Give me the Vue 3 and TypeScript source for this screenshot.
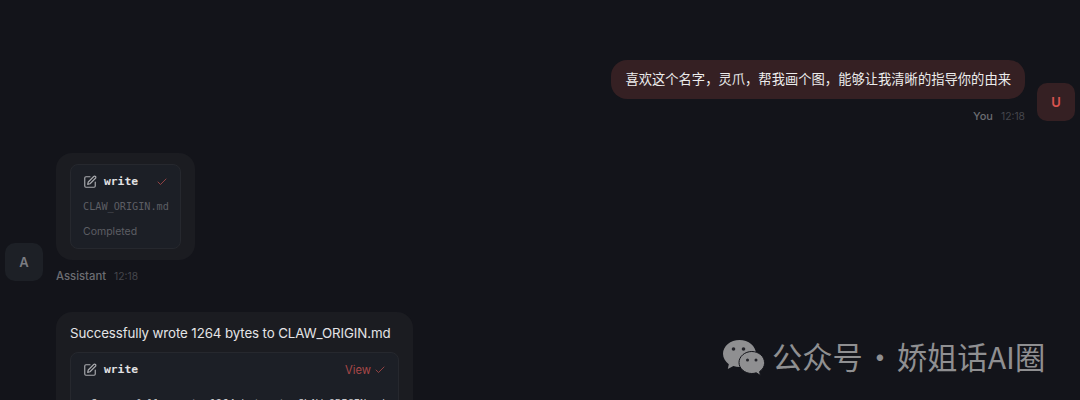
<script setup lang="ts">
import { ref } from 'vue'

const userText = ref('喜欢这个名字\uFF0C灵爪\uFF0C帮我画个图\uFF0C能够让我清晰的指导你的由来')
const fileName = 'CLAW_ORIGIN.md'
const time = '12:18'
</script>

<template>
  <div class="page">
    <section class="thread">
      <div class="row row-user">
        <div class="msg msg-user">
          <div class="bubble bubble-user">{{ userText }}</div>
          <div class="meta">
            <span class="meta-name">You</span>
            <span class="meta-time">{{ time }}</span>
          </div>
        </div>
        <div class="avatar avatar-user">U</div>
      </div>

      <div class="row row-assistant">
        <div class="avatar avatar-assistant">A</div>
        <div class="msg">
          <div class="bubble bubble-tool">
            <div class="tool tool-small">
              <div class="tool-head">
                <svg class="edit-icon" viewBox="0 0 24 24"><path d="M12 3H5a2 2 0 0 0-2 2v14a2 2 0 0 0 2 2h14a2 2 0 0 0 2-2v-7" /><path d="M18.4 2.6a2.1 2.1 0 1 1 3 3L12 15l-4 1 1-4Z" /></svg>
                <span class="tool-name">write</span>
                <svg class="check-icon check-small" viewBox="0 0 24 24"><path d="M20 6 9 17l-5-5" /></svg>
              </div>
              <div class="tool-file">{{ fileName }}</div>
              <div class="tool-status">Completed</div>
            </div>
          </div>
          <div class="meta">
            <span class="meta-name">Assistant</span>
            <span class="meta-time">{{ time }}</span>
          </div>
        </div>
      </div>

      <div class="row row-result">
        <div class="bubble bubble-result">
          <p class="result-text">Successfully wrote 1264 bytes to {{ fileName }}</p>
          <div class="tool tool-wide">
            <div class="tool-head">
              <svg class="edit-icon" viewBox="0 0 24 24"><path d="M12 3H5a2 2 0 0 0-2 2v14a2 2 0 0 0 2 2h14a2 2 0 0 0 2-2v-7" /><path d="M18.4 2.6a2.1 2.1 0 1 1 3 3L12 15l-4 1 1-4Z" /></svg>
              <span class="tool-name">write</span>
              <span class="view">View</span>
              <svg class="check-icon" viewBox="0 0 24 24"><path d="M20 6 9 17l-5-5" /></svg>
            </div>
            <div class="tool-output">Successfully wrote 1264 bytes to {{ fileName }}</div>
          </div>
        </div>
      </div>
    </section>

    <div class="watermark">
      <svg class="wechat" viewBox="0 0 42 36">
        <path class="bubble-back" d="M16.500 0C7.500 0 0 6.200 0 13.800c0 4.200 2.300 7.900 5.800 10.400L4.800 29l5.600-3c1.900.6 4 .9 6.100.9 9 0 16.500-6 16.500-13.100C33 6.200 25.500 0 16.500 0Z" />
        <path class="bubble-front" d="M41.500 22.500c0-6-5.700-11-12.700-11s-12.800 5-12.800 11 5.800 11 12.800 11c1.500 0 3-.2 4.400-.7l4.300 2.700-.9-4c3-2 4.900-5 4.900-8Z" />
        <circle class="eye" cx="10.500" cy="9" r="1.800" />
        <circle class="eye" cx="20.500" cy="9" r="1.800" />
        <circle class="eye" cx="24.500" cy="20" r="1.500" />
        <circle class="eye" cx="33" cy="20" r="1.500" />
      </svg>
      <span class="wm-text">公众号 · 娇姐话AI圈</span>
    </div>
  </div>
</template>

<style scoped>
.page {
  position: relative;
  width: 1080px;
  height: 400px;
  overflow: hidden;
  background-color: #13141a;
  font-family: 'Inter', 'Noto Sans CJK SC', sans-serif;
}

.thread {
  display: flex;
  flex-direction: column;
  padding: 60px 5px 0;
}

.row {
  display: flex;
  align-items: flex-end;
  gap: 12px;
}

.row-user {
  justify-content: flex-end;
}

.row-assistant {
  gap: 13px;
  margin-top: 29px;
}

.row-result {
  margin-top: 28px;
  padding-left: 51px;
}

.msg {
  display: flex;
  flex-direction: column;
}

.msg-user {
  align-items: flex-end;
}

.msg-user .meta {
  margin-top: 10px;
}

.bubble {
  border-radius: 16px;
}

.bubble-user {
  padding: 10px 14px;
  height: 39px;
  box-sizing: border-box;
  background-color: #352023;
  color: #ececec;
  font-size: 13.3px;
  line-height: 19px;
}

.bubble-tool {
  width: 139px;
  height: 107px;
  box-sizing: border-box;
  padding: 11px 14px;
  background-color: #1b1c21;
}

.bubble-result {
  width: 357px;
  height: 140px;
  box-sizing: border-box;
  padding: 12px 14px;
  background-color: #1b1c21;
}

.result-text {
  margin: 0 0 9px;
  color: #e4e4e6;
  font-size: 13.3px;
  letter-spacing: -0.1px;
  line-height: 19px;
  white-space: nowrap;
}

.meta {
  display: flex;
  gap: 8px;
  margin-top: 9px;
  font-size: 11.3px;
  line-height: 15px;
}

.msg-user .meta-name {
  font-size: 11px;
}

.meta-name {
  color: #6c6d72;
  font-weight: 500;
}

.meta-time {
  color: #45464c;
  font-size: 10.3px;
}

.avatar {
  flex: none;
  display: flex;
  align-items: center;
  justify-content: center;
  width: 38px;
  height: 38px;
  margin-bottom: 3px;
  border-radius: 10px;
  font-size: 13px;
  font-weight: 600;
}

.avatar-user {
  background-color: #352023;
  color: #d9534f;
}

.avatar-assistant {
  background-color: #1d2026;
  color: #7b7c82;
}

.tool {
  box-sizing: border-box;
  border: 1px solid #26282e;
  border-radius: 8px;
  background-color: #1c1f26;
}

.tool-small {
  height: 85px;
  padding: 8px 12px;
}

.tool-wide {
  width: 329px;
  padding: 8px 12px;
}

.tool-head {
  display: flex;
  align-items: center;
  height: 17px;
}

.edit-icon {
  width: 14px;
  height: 14px;
  fill: none;
  stroke: #a9aaae;
  stroke-width: 2;
  stroke-linecap: round;
  stroke-linejoin: round;
}

.tool-name {
  margin-left: 7px;
  color: #e2e2e4;
  font-family: 'DejaVu Sans Mono', monospace;
  font-size: 11.3px;
  font-weight: 700;
}

.check-icon {
  width: 12px;
  height: 12px;
  fill: none;
  stroke: #a84848;
  stroke-width: 1.7;
  stroke-linecap: round;
  stroke-linejoin: round;
}

.check-small {
  margin-left: auto;
}

.view {
  margin-left: auto;
  margin-right: 3px;
  color: #a84848;
  font-size: 11.2px;
}

.tool-file {
  margin-top: 10px;
  color: #5d5e64;
  font-family: 'DejaVu Sans Mono', monospace;
  font-size: 10.2px;
  line-height: 14px;
}

.tool-status {
  margin-top: 10px;
  color: #5d5e64;
  font-size: 10.5px;
  line-height: 15px;
}

.tool-output {
  margin-top: 18px;
  margin-left: 8px;
  color: #c8c8cc;
  font-family: 'DejaVu Sans Mono', monospace;
  font-size: 10.4px;
  line-height: 14px;
  white-space: nowrap;
}

.watermark {
  position: absolute;
  left: 723px;
  top: 338px;
  display: flex;
  align-items: center;
  gap: 7px;
}

.wechat {
  width: 42px;
  height: 36px;
}

.bubble-back,
.bubble-front {
  fill: #8f8f91;
}

.bubble-front {
  stroke: #13141a;
  stroke-width: 1;
}

.eye {
  fill: #24242a;
}

.wm-text {
  margin-bottom: 4px;
  color: #8f8f91;
  font-family: 'Noto Sans CJK SC', sans-serif;
  font-size: 30.3px;
  word-spacing: -5px;
  line-height: 36px;
  white-space: nowrap;
}
</style>
